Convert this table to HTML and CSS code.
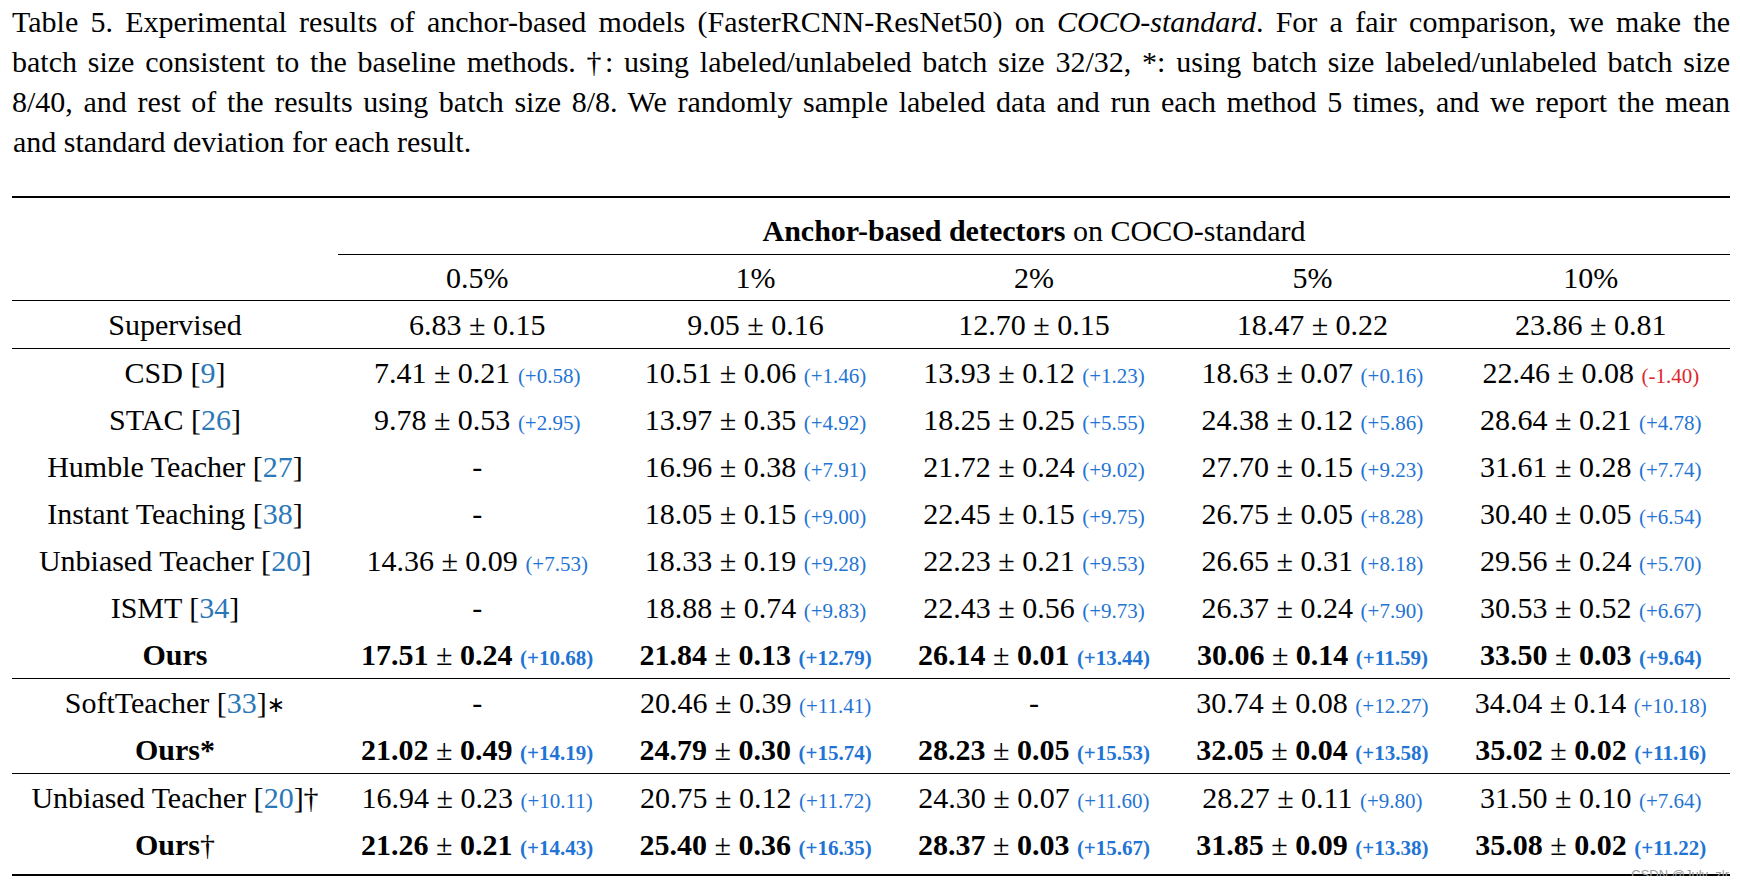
FILE: index.html
```html
<!DOCTYPE html>
<html>
<head>
<meta charset="utf-8">
<link rel="stylesheet" href="styles.css">
</head>
<body>
<div class="page">
  <div class="caption">
    <div class="cl">Table 5. Experimental results of anchor-based models (FasterRCNN-ResNet50) on <i>COCO-standard</i>. For a fair comparison, we make the</div>
    <div class="cl">batch size consistent to the baseline methods. †: using labeled/unlabeled batch size 32/32, *: using batch size labeled/unlabeled batch size</div>
    <div class="cl">8/40, and rest of the results using batch size 8/8. We randomly sample labeled data and run each method 5 times, and we report the mean</div>
    <div class="cl-last">and standard deviation for each result.</div>
  </div>

  <div class="tbl">
    <div class="row h1row">
      <div></div>
      <div class="span"><b>Anchor-based detectors</b> on COCO-standard</div>
    </div>
    <div class="row h2row ruled">
      <div></div><div>0.5%</div><div>1%</div><div>2%</div><div>5%</div><div>10%</div>
    </div>
    <div class="row ruled">
      <div>Supervised</div><div>6.83 ± 0.15</div><div>9.05 ± 0.16</div><div>12.70 ± 0.15</div><div>18.47 ± 0.22</div><div>23.86 ± 0.81</div>
    </div>

    <div class="row">
      <div>CSD [<span class="cite">9</span>]</div>
      <div>7.41 ± 0.21 <span class="d">(+0.58)</span></div>
      <div>10.51 ± 0.06 <span class="d">(+1.46)</span></div>
      <div>13.93 ± 0.12 <span class="d">(+1.23)</span></div>
      <div>18.63 ± 0.07 <span class="d">(+0.16)</span></div>
      <div>22.46 ± 0.08 <span class="d neg">(-1.40)</span></div>
    </div>
    <div class="row">
      <div>STAC [<span class="cite">26</span>]</div>
      <div>9.78 ± 0.53 <span class="d">(+2.95)</span></div>
      <div>13.97 ± 0.35 <span class="d">(+4.92)</span></div>
      <div>18.25 ± 0.25 <span class="d">(+5.55)</span></div>
      <div>24.38 ± 0.12 <span class="d">(+5.86)</span></div>
      <div>28.64 ± 0.21 <span class="d">(+4.78)</span></div>
    </div>
    <div class="row">
      <div>Humble Teacher [<span class="cite">27</span>]</div>
      <div>-</div>
      <div>16.96 ± 0.38 <span class="d">(+7.91)</span></div>
      <div>21.72 ± 0.24 <span class="d">(+9.02)</span></div>
      <div>27.70 ± 0.15 <span class="d">(+9.23)</span></div>
      <div>31.61 ± 0.28 <span class="d">(+7.74)</span></div>
    </div>
    <div class="row">
      <div>Instant Teaching [<span class="cite">38</span>]</div>
      <div>-</div>
      <div>18.05 ± 0.15 <span class="d">(+9.00)</span></div>
      <div>22.45 ± 0.15 <span class="d">(+9.75)</span></div>
      <div>26.75 ± 0.05 <span class="d">(+8.28)</span></div>
      <div>30.40 ± 0.05 <span class="d">(+6.54)</span></div>
    </div>
    <div class="row">
      <div>Unbiased Teacher [<span class="cite">20</span>]</div>
      <div>14.36 ± 0.09 <span class="d">(+7.53)</span></div>
      <div>18.33 ± 0.19 <span class="d">(+9.28)</span></div>
      <div>22.23 ± 0.21 <span class="d">(+9.53)</span></div>
      <div>26.65 ± 0.31 <span class="d">(+8.18)</span></div>
      <div>29.56 ± 0.24 <span class="d">(+5.70)</span></div>
    </div>
    <div class="row">
      <div>ISMT [<span class="cite">34</span>]</div>
      <div>-</div>
      <div>18.88 ± 0.74 <span class="d">(+9.83)</span></div>
      <div>22.43 ± 0.56 <span class="d">(+9.73)</span></div>
      <div>26.37 ± 0.24 <span class="d">(+7.90)</span></div>
      <div>30.53 ± 0.52 <span class="d">(+6.67)</span></div>
    </div>
    <div class="row ours ruled">
      <div>Ours</div>
      <div>17.51 <span class="pm">±</span> 0.24 <span class="d">(+10.68)</span></div>
      <div>21.84 <span class="pm">±</span> 0.13 <span class="d">(+12.79)</span></div>
      <div>26.14 <span class="pm">±</span> 0.01 <span class="d">(+13.44)</span></div>
      <div>30.06 <span class="pm">±</span> 0.14 <span class="d">(+11.59)</span></div>
      <div>33.50 <span class="pm">±</span> 0.03 <span class="d">(+9.64)</span></div>
    </div>

    <div class="row">
      <div>SoftTeacher [<span class="cite">33</span>]<span class="ast">∗</span></div>
      <div>-</div>
      <div>20.46 ± 0.39 <span class="d">(+11.41)</span></div>
      <div>-</div>
      <div>30.74 ± 0.08 <span class="d">(+12.27)</span></div>
      <div>34.04 ± 0.14 <span class="d">(+10.18)</span></div>
    </div>
    <div class="row ours ruled">
      <div>Ours*</div>
      <div>21.02 <span class="pm">±</span> 0.49 <span class="d">(+14.19)</span></div>
      <div>24.79 <span class="pm">±</span> 0.30 <span class="d">(+15.74)</span></div>
      <div>28.23 <span class="pm">±</span> 0.05 <span class="d">(+15.53)</span></div>
      <div>32.05 <span class="pm">±</span> 0.04 <span class="d">(+13.58)</span></div>
      <div>35.02 <span class="pm">±</span> 0.02 <span class="d">(+11.16)</span></div>
    </div>

    <div class="row">
      <div>Unbiased Teacher [<span class="cite">20</span>]†</div>
      <div>16.94 ± 0.23 <span class="d">(+10.11)</span></div>
      <div>20.75 ± 0.12 <span class="d">(+11.72)</span></div>
      <div>24.30 ± 0.07 <span class="d">(+11.60)</span></div>
      <div>28.27 ± 0.11 <span class="d">(+9.80)</span></div>
      <div>31.50 ± 0.10 <span class="d">(+7.64)</span></div>
    </div>
    <div class="row ours">
      <div>Ours<span class="pm">†</span></div>
      <div>21.26 <span class="pm">±</span> 0.21 <span class="d">(+14.43)</span></div>
      <div>25.40 <span class="pm">±</span> 0.36 <span class="d">(+16.35)</span></div>
      <div>28.37 <span class="pm">±</span> 0.03 <span class="d">(+15.67)</span></div>
      <div>31.85 <span class="pm">±</span> 0.09 <span class="d">(+13.38)</span></div>
      <div>35.08 <span class="pm">±</span> 0.02 <span class="d">(+11.22)</span></div>
    </div>
    <div class="wm">CSDN @July_zlr</div>
  </div>
</div>
</body>
</html>
```

FILE: styles.css
```css
html, body {
  margin: 0;
  padding: 0;
  background: #ffffff;
}

body {
  color: #000000;
  font-family: "Liberation Serif", "Times New Roman", "DejaVu Serif", serif;
}

.page {
  width: 1718px;
  padding-left: 12px;
}

.caption {
  font-size: 30px;
  line-height: 40px;
  padding-top: 2px;
}

.cl {
  text-align: justify;
  text-align-last: justify;
}

.cl-last {
  text-align: left;
  padding-left: 1px;
}

.tbl {
  position: relative;
  margin-top: 34px;
  border-top: 2px solid #000;
  border-bottom: 2px solid #000;
  padding-bottom: 6px;
}

.row {
  display: grid;
  grid-template-columns: 326px repeat(5, 1fr);
  font-size: 30px;
  line-height: 47px;
  text-align: center;
  white-space: nowrap;
}

.ruled {
  border-bottom: 1px solid #000;
}

.h1row {
  line-height: 46px;
}

.h1row .span {
  grid-column: 2 / 7;
  padding-top: 10px;
  border-bottom: 1px solid #000;
}

.h2row {
  line-height: 45px;
}

.d {
  font-size: 21px;
  line-height: 1;
  color: #1f74d4;
}

.d.neg {
  color: #e0262c;
}

.cite {
  color: #2a78b8;
}

.ours {
  font-weight: bold;
}

.pm {
  font-weight: normal;
}

.ast {
  font-family: "DejaVu Sans", sans-serif;
  font-size: 22px;
  line-height: 1;
  position: relative;
  top: -1px;
}

.wm {
  position: absolute;
  right: 1px;
  bottom: -9px;
  font-family: "Liberation Sans", Arial, sans-serif;
  font-size: 13px;
  line-height: 16px;
  color: #9c9c9c;
}
```
